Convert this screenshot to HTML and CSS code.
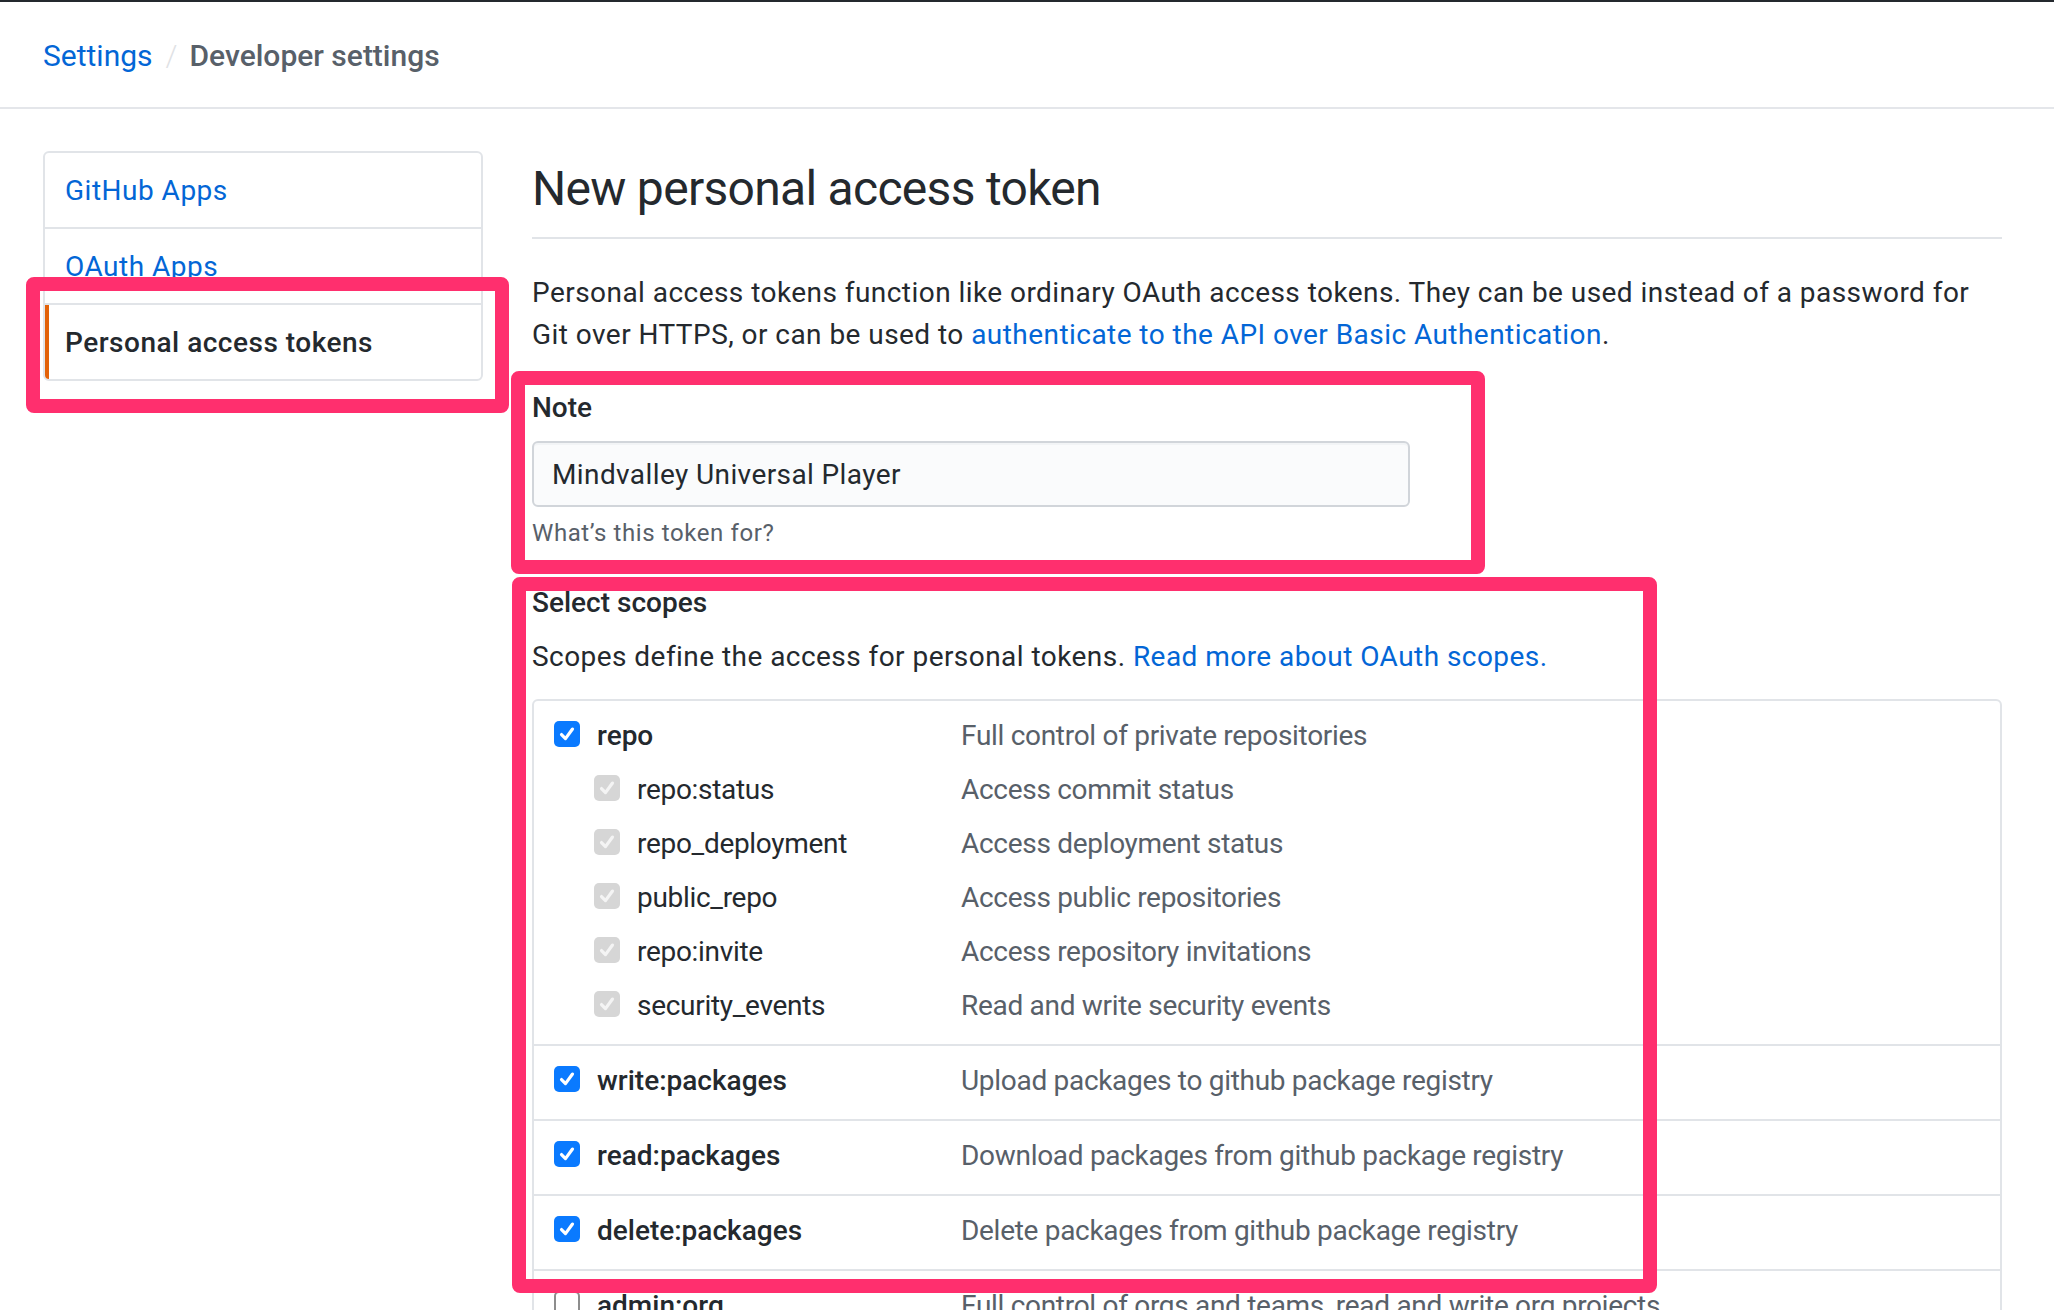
FILE: index.html
```html
<!DOCTYPE html>
<html lang="en">
<head>
<meta charset="utf-8">
<title>New personal access token</title>
<link rel="stylesheet" href="styles.css">
</head>
<body>
<div class="topbar"></div>
<header class="crumbs">
  <a class="crumb-link" href="#">Settings</a>
  <span class="crumb-sep">/</span>
  <span class="crumb-current">Developer settings</span>
</header>

<div class="layout">
  <nav class="menu">
    <a class="menu-item" href="#">GitHub Apps</a>
    <a class="menu-item" href="#">OAuth Apps</a>
    <a class="menu-item selected" href="#">Personal access tokens</a>
  </nav>

  <main class="content">
    <div class="subhead">
      <h2 class="subhead-heading">New personal access token</h2>
    </div>
    <p class="intro">Personal access tokens function like ordinary OAuth access tokens. They can be used instead of a password for<br>Git over HTTPS, or can be used to <a href="#">authenticate to the API over Basic Authentication</a>.</p>

    <div class="form-group">
      <label class="form-label" for="note">Note</label>
      <input class="form-input" id="note" type="text" value="Mindvalley Universal Player">
      <p class="form-note">What’s this token for?</p>
    </div>

    <div class="scopes">
      <h3 class="form-label">Select scopes</h3>
      <p class="scopes-lead">Scopes define the access for personal tokens. <a href="#">Read more about OAuth scopes.</a></p>

      <div class="scope-table">
        <div class="scope-row">
          <div class="scope-line">
            <div class="scope-key"><span class="cb checked"><svg viewBox="0 0 16 16"><path d="M4 8.4 L6.9 11.4 L12 4.4"/></svg></span><span class="scope-name strong">repo</span></div>
            <div class="scope-desc">Full control of private repositories</div>
          </div>
          <div class="scope-line sub">
            <div class="scope-key"><span class="cb disabled"><svg viewBox="0 0 16 16"><path d="M4 8.4 L6.9 11.4 L12 4.4"/></svg></span><span class="scope-name">repo:status</span></div>
            <div class="scope-desc">Access commit status</div>
          </div>
          <div class="scope-line sub">
            <div class="scope-key"><span class="cb disabled"><svg viewBox="0 0 16 16"><path d="M4 8.4 L6.9 11.4 L12 4.4"/></svg></span><span class="scope-name">repo_deployment</span></div>
            <div class="scope-desc">Access deployment status</div>
          </div>
          <div class="scope-line sub">
            <div class="scope-key"><span class="cb disabled"><svg viewBox="0 0 16 16"><path d="M4 8.4 L6.9 11.4 L12 4.4"/></svg></span><span class="scope-name">public_repo</span></div>
            <div class="scope-desc">Access public repositories</div>
          </div>
          <div class="scope-line sub">
            <div class="scope-key"><span class="cb disabled"><svg viewBox="0 0 16 16"><path d="M4 8.4 L6.9 11.4 L12 4.4"/></svg></span><span class="scope-name">repo:invite</span></div>
            <div class="scope-desc">Access repository invitations</div>
          </div>
          <div class="scope-line sub">
            <div class="scope-key"><span class="cb disabled"><svg viewBox="0 0 16 16"><path d="M4 8.4 L6.9 11.4 L12 4.4"/></svg></span><span class="scope-name">security_events</span></div>
            <div class="scope-desc">Read and write security events</div>
          </div>
        </div>

        <div class="scope-row">
          <div class="scope-line">
            <div class="scope-key"><span class="cb checked"><svg viewBox="0 0 16 16"><path d="M4 8.4 L6.9 11.4 L12 4.4"/></svg></span><span class="scope-name strong">write:packages</span></div>
            <div class="scope-desc">Upload packages to github package registry</div>
          </div>
        </div>

        <div class="scope-row">
          <div class="scope-line">
            <div class="scope-key"><span class="cb checked"><svg viewBox="0 0 16 16"><path d="M4 8.4 L6.9 11.4 L12 4.4"/></svg></span><span class="scope-name strong">read:packages</span></div>
            <div class="scope-desc">Download packages from github package registry</div>
          </div>
        </div>

        <div class="scope-row">
          <div class="scope-line">
            <div class="scope-key"><span class="cb checked"><svg viewBox="0 0 16 16"><path d="M4 8.4 L6.9 11.4 L12 4.4"/></svg></span><span class="scope-name strong">delete:packages</span></div>
            <div class="scope-desc">Delete packages from github package registry</div>
          </div>
        </div>

        <div class="scope-row">
          <div class="scope-line">
            <div class="scope-key"><span class="cb empty"></span><span class="scope-name strong">admin:org</span></div>
            <div class="scope-desc">Full control of orgs and teams, read and write org projects</div>
          </div>
        </div>
      </div>
    </div>
  </main>
</div>

<div class="mark mark-menu"></div>
<div class="mark mark-note"></div>
<div class="mark mark-scopes"></div>
</body>
</html>
```

FILE: styles.css
```css
* { box-sizing: border-box; }

html, body {
  margin: 0;
  padding: 0;
  background: #ffffff;
}

body {
  font-family: "Roboto", "Liberation Sans", sans-serif;
  font-size: 28px;
  line-height: 42px;
  color: #24292e;
  position: relative;
  min-height: 1500px;
}

a { color: #0366d6; text-decoration: none; }

.topbar {
  height: 2px;
  background: #24292e;
}

.crumbs {
  display: flex;
  align-items: center;
  padding: 31px 43px 28px;
  border-bottom: 2px solid #e4e6ea;
  font-size: 30px;
  line-height: 46px;
}

.crumb-link { color: #0366d6; }

.crumb-sep {
  color: #dfe2e5;
  margin: 0 12px 0 13px;
  font-weight: 300;
}

.crumb-current {
  color: #586069;
  font-weight: 500;
}

.layout {
  display: flex;
  align-items: flex-start;
  gap: 49px;
  padding: 42px 52px 0 43px;
}

.menu {
  flex: 0 0 440px;
  display: flex;
  flex-direction: column;
  border: 2px solid #e1e4e8;
  border-radius: 6px;
  overflow: hidden;
}

.menu-item {
  display: block;
  padding: 17px 22px 15px 20px;
  line-height: 42px;
  color: #0366d6;
  letter-spacing: 0.5px;
  border-top: 2px solid #e1e4e8;
}

.menu-item:first-child { border-top: 0; }

.menu-item.selected {
  color: #24292e;
  font-weight: 500;
  box-shadow: inset 4px 0 0 #e36209;
}

.content {
  flex: 1 1 auto;
  min-width: 0;
}

.subhead {
  padding-top: 3px;
  padding-bottom: 13px;
  border-bottom: 2px solid #e1e4e8;
  margin-bottom: 33px;
}

.subhead-heading {
  margin: 0;
  font-size: 48px;
  line-height: 70px;
  font-weight: 400;
  letter-spacing: -0.7px;
  color: #24292e;
}

.intro {
  margin: 0 0 31px;
  letter-spacing: 0.45px;
}

.form-group {
  margin-bottom: 31px;
}

.form-label {
  display: block;
  margin: 0 0 12px;
  font-size: 28px;
  line-height: 42px;
  font-weight: 500;
  color: #24292e;
}

.form-input {
  display: block;
  width: 878px;
  height: 66px;
  padding: 0 18px;
  font-family: inherit;
  font-size: 28px;
  letter-spacing: 0.4px;
  color: #24292e;
  background: #fafbfc;
  border: 2px solid #d1d5da;
  border-radius: 6px;
  box-shadow: inset 0 2px 0 rgba(225, 228, 232, 0.3);
  outline: none;
}

.form-note {
  margin: 8px 0 0;
  font-size: 24px;
  line-height: 36px;
  letter-spacing: 0.6px;
  color: #586069;
}

.scopes-lead {
  margin: 0 0 21px;
  letter-spacing: 0.45px;
}

.scope-table {
  border: 2px solid #e1e4e8;
  border-radius: 6px;
}

.scope-row {
  padding: 8px 20px 11px;
  border-top: 2px solid #e1e4e8;
}

.scope-row:first-child { border-top: 0; }

.scope-line {
  display: grid;
  grid-template-columns: 407px 1fr;
  height: 54px;
  line-height: 54px;
}

.scope-key {
  display: flex;
  align-items: center;
  gap: 17px;
}

.scope-line.sub .scope-key { padding-left: 40px; }

.scope-name { color: #24292e; letter-spacing: -0.3px; }
.scope-name.strong { font-weight: 500; letter-spacing: 0; }

.scope-desc { color: #586069; letter-spacing: -0.3px; }

.cb {
  flex: 0 0 26px;
  width: 26px;
  height: 26px;
  margin-top: -4px;
  border-radius: 5px;
  display: flex;
  align-items: center;
  justify-content: center;
}

.cb svg {
  width: 22px;
  height: 22px;
  fill: none;
  stroke: #ffffff;
  stroke-width: 2.3;
  stroke-linecap: round;
  stroke-linejoin: round;
}

.cb.checked { background: #0a7aff; }
.cb.disabled { background: #d6d6d6; }
.cb.disabled svg { stroke: #f4f4f4; }
.cb.empty {
  background: #ffffff;
  border: 2px solid #8d8d8d;
}

/* annotation frames drawn over the screenshot */
.mark {
  position: absolute;
  border: 14px solid #ff2f6e;
  border-radius: 8px;
  pointer-events: none;
}

.mark-menu { left: 26px; top: 277px; width: 483px; height: 136px; }
.mark-note { left: 511px; top: 371px; width: 974px; height: 203px; }
.mark-scopes { left: 512px; top: 577px; width: 1145px; height: 716px; }
```
